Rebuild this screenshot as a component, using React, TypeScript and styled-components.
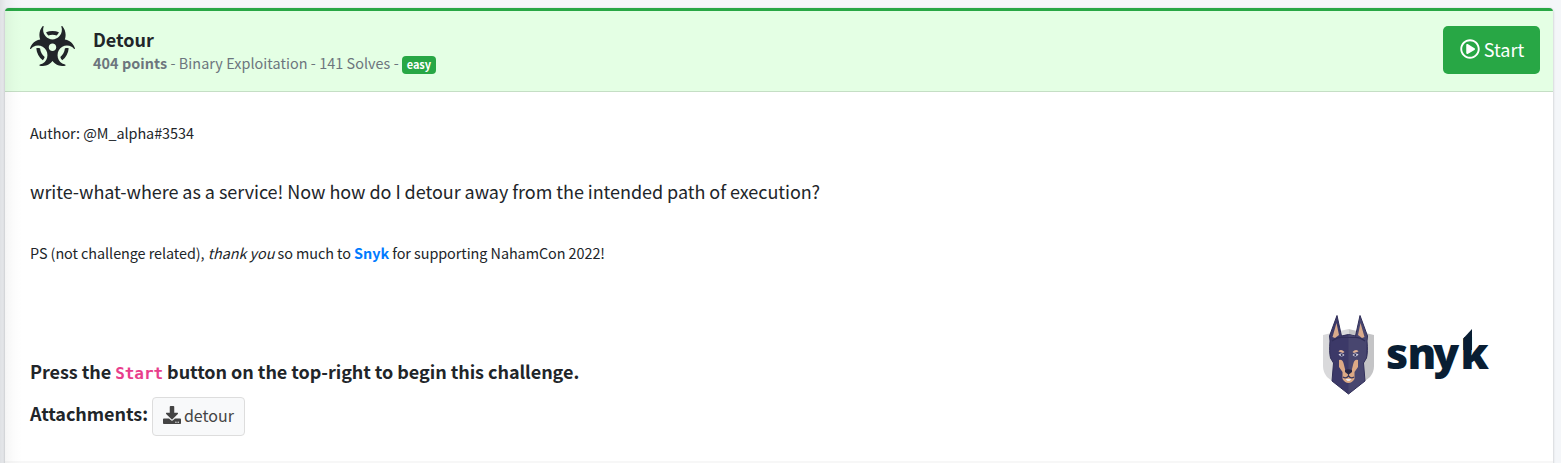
import React from "react";
import styled, { createGlobalStyle } from "styled-components";
import { FaBiohazard, FaDownload, FaRegPlayCircle } from "react-icons/fa";

const GlobalStyle = createGlobalStyle`
  * { box-sizing: border-box; }
  body {
    margin: 0;
    height: 463px;
    overflow: hidden;
    background: #f4f6f9;
    color: #212529;
    font-family: "Noto Sans CJK SC", "Open Sans", sans-serif;
  }
`;

const Page = styled.main`
  position: relative;
  height: 463px;
  padding: 8px 8px 0 5px;
  overflow: hidden;
`;

const SidebarShade = styled.div`
  position: absolute;
  inset: 0 auto 0 0;
  width: 22px;
  pointer-events: none;
  background: linear-gradient(90deg, rgba(0, 0, 0, 0.085), rgba(0, 0, 0, 0.035) 6px, rgba(0, 0, 0, 0.01) 14px, transparent);
`;

const Card = styled.article`
  height: 480px;
  border-top: 3px solid #28a745;
  border-radius: 4px;
  background: #fff;
  box-shadow: 0 0 1px rgba(0, 0, 0, 0.125), 0 1px 3px rgba(0, 0, 0, 0.2);
`;

const Header = styled.header`
  display: flex;
  height: 81px;
  padding: 15px 13px 0 25px;
  border-bottom: 1px solid #c5dec5;
  background: #e4ffe4;
`;

const Hazard = styled(FaBiohazard)`
  width: 45px;
  height: 40px;
`;

const Heading = styled.div`
  flex: 1;
  margin: 1px 0 0 18px;
`;

const Line = styled.div<{ $size: number; $height: number; $bold?: boolean; $track?: number }>`
  font-size: ${(p) => p.$size}px;
  line-height: ${(p) => p.$height}px;
  height: ${(p) => p.$height}px;
  font-weight: ${(p) => (p.$bold ? 700 : 400)};
  letter-spacing: ${(p) => p.$track ?? 0}px;
  white-space: nowrap;
`;

const Meta = styled(Line)`
  display: flex;
  align-items: center;
  margin-top: 1px;
  color: #6c757d;
`;

const Badge = styled.span`
  height: 18px;
  margin: 3px 0 0 3px;
  padding: 0 5px;
  border-radius: 4px;
  background: #28a745;
  color: #fff;
  font-size: 11px;
  line-height: 17px;
  font-weight: 700;
  letter-spacing: -0.1px;
`;

const StartButton = styled.button`
  display: flex;
  align-items: center;
  justify-content: center;
  gap: 4px;
  width: 97px;
  height: 48px;
  padding: 0 0 2px 1px;
  border: 0;
  border-radius: 5px;
  background: #28a745;
  color: #fff;
  font: 400 18px/30px "Noto Sans CJK SC", sans-serif;
`;

const Body = styled.section`
  display: flex;
  height: 369px;
  padding: 30px 61px 0 25px;
  justify-content: space-between;
`;

const Copy = styled.div`
  display: flex;
  flex-direction: column;
`;

const Prompt = styled(Line)`
  margin: 33px 0 37px;
`;

const Instruction = styled(Line)`
  margin: 92px 0 12px;
`;

const Link = styled.a`
  color: #007bff;
  font-weight: 700;
`;

const Code = styled.code`
  color: #e83e8c;
  font: 700 16px/24px "DejaVu Sans Mono", monospace;
`;

const Attachments = styled.div`
  display: flex;
  gap: 4px;
`;

const FileButton = styled.button`
  display: flex;
  align-items: center;
  justify-content: center;
  gap: 3px;
  width: 93px;
  height: 39px;
  margin-top: -1px;
  padding: 0 0 3px;
  border: 1px solid #ddd;
  border-radius: 4px;
  background: #f8f9fa;
  color: #444;
  font: 400 16px/24px "Noto Sans CJK SC", sans-serif;
`;

const Footer = styled.footer`
  height: 30px;
  background: #f7f7f7;
`;

const Logo = styled.svg`
  width: 170px;
  height: 84px;
  margin-top: 192px;
  overflow: visible;
`;

function SnykLogo() {
  return (
    <Logo viewBox="1322 314 170 84" aria-label="snyk">
      <path d="M1323 335L1348.5 329V394L1327 377Q1323 372 1323 366Z" fill="#d9d9db" />
      <path d="M1348.5 329L1374 335V366Q1374 372 1370 377L1348.5 394Z" fill="#c4c4c6" />
      <path d="M1330 341L1329.5 336 1337 315.5 1341.5 336Q1348.5 333 1355.5 336L1360 315.5 1367.5 336 1367 341Q1368 352 1366.5 358L1363.5 363 1365 381 1348.5 394 1332 381 1333.5 363 1330.5 358Q1329 352 1330 341Z" fill="#3c3968" stroke="#2f2d57" strokeWidth="1" />
      <path d="M1348.5 334.5Q1353 334.5 1356 337L1360 317 1367 336 1366.5 341 1366 358 1363 363 1364.5 381 1348.5 393.5Z" fill="#48466f" />
      <path d="M1332.5 337L1336.5 323 1339 335 1335 338ZM1364.5 337L1360.5 323 1358 335 1362 338Z" fill="#d9aa8b" />
      <path d="M1332 341Q1338 337 1342 337.5H1355Q1359 337 1365 341" fill="none" stroke="#302e58" strokeWidth="1.2" />
      <path d="M1338.5 351.5Q1341 348.5 1344.5 352L1343 353ZM1358.5 351.5Q1356 348.5 1352.5 352L1354 353Z" fill="#e0b296" />
      <path d="M1338.5 354.5Q1341.5 352.5 1344.5 355Q1341.5 358 1338.5 354.5ZM1358.5 354.5Q1355.5 352.5 1352.5 355Q1355.5 358 1358.5 354.5Z" fill="#d9d9ea" />
      <circle cx="1341.7" cy="355" r="1.1" fill="#28274a" />
      <circle cx="1355.3" cy="355" r="1.1" fill="#28274a" />
      <path d="M1339 360Q1343 359 1344 365L1345.5 371H1351.5L1353 365Q1354 359 1358 360V367L1354.5 372V379Q1352 383 1348.5 383T1342.5 379V372L1339 367Z" fill="#dca985" />
      <path d="M1345 370Q1348.5 368.5 1352 370V372L1349.5 374H1347.5L1345 372Z" fill="#282744" />
      <path d="M1348.5 374V376Q1346 379 1343 377M1348.5 376Q1351 379 1354 377" fill="none" stroke="#38365b" strokeWidth="1.2" />
      <path d="M1345.5 379H1351.5L1349.5 381H1347.5Z" fill="#e9e9ef" />
      <text y="368.5" x="1386 1407.5 1433 1460.5" fill="#091e33" fontFamily="Open Sans" fontWeight="800" fontSize="43">snyk</text>
      <path d="M1459 333H1472V329L1463.3 338.5H1459Z" fill="#fff" />
      <path d="M1463.3 338.5L1472 329V350H1463.3Z" fill="#091e33" />
    </Logo>
  );
}

export default function App() {
  return (
    <>
      <GlobalStyle />
      <Page>
        <Card>
          <Header>
            <Hazard />
            <Heading>
              <Line $size={18} $height={24} $bold>Detour</Line>
              <Meta $size={14.4} $height={22} $track={0.055}>
                <span><b>404 points</b> - Binary Exploitation - 141 Solves -</span>
                <Badge>easy</Badge>
              </Meta>
            </Heading>
            <StartButton><FaRegPlayCircle size={20} />Start</StartButton>
          </Header>
          <Body>
            <Copy>
              <Line $size={14.4} $height={22} $track={-0.04}>Author: @M_alpha#3534</Line>
              <Prompt $size={18} $height={28} $track={-0.047}>write-what-where as a service! Now how do I detour away from the intended path of execution?</Prompt>
              <Line $size={14.4} $height={22} $track={-0.055}>
                PS (not challenge related), <em>thank you</em> so much to <Link>Snyk</Link> for supporting NahamCon 2022!
              </Line>
              <Instruction $size={18} $height={30} $track={-0.05} $bold>
                Press the <Code>Start</Code> button on the top-right to begin this challenge.
              </Instruction>
              <Attachments>
                <Line $size={18} $height={30} $track={-0.06} $bold>Attachments:</Line>
                <FileButton><FaDownload size={18} />detour</FileButton>
              </Attachments>
            </Copy>
            <SnykLogo />
          </Body>
          <Footer />
        </Card>
        <SidebarShade />
      </Page>
    </>
  );
}
